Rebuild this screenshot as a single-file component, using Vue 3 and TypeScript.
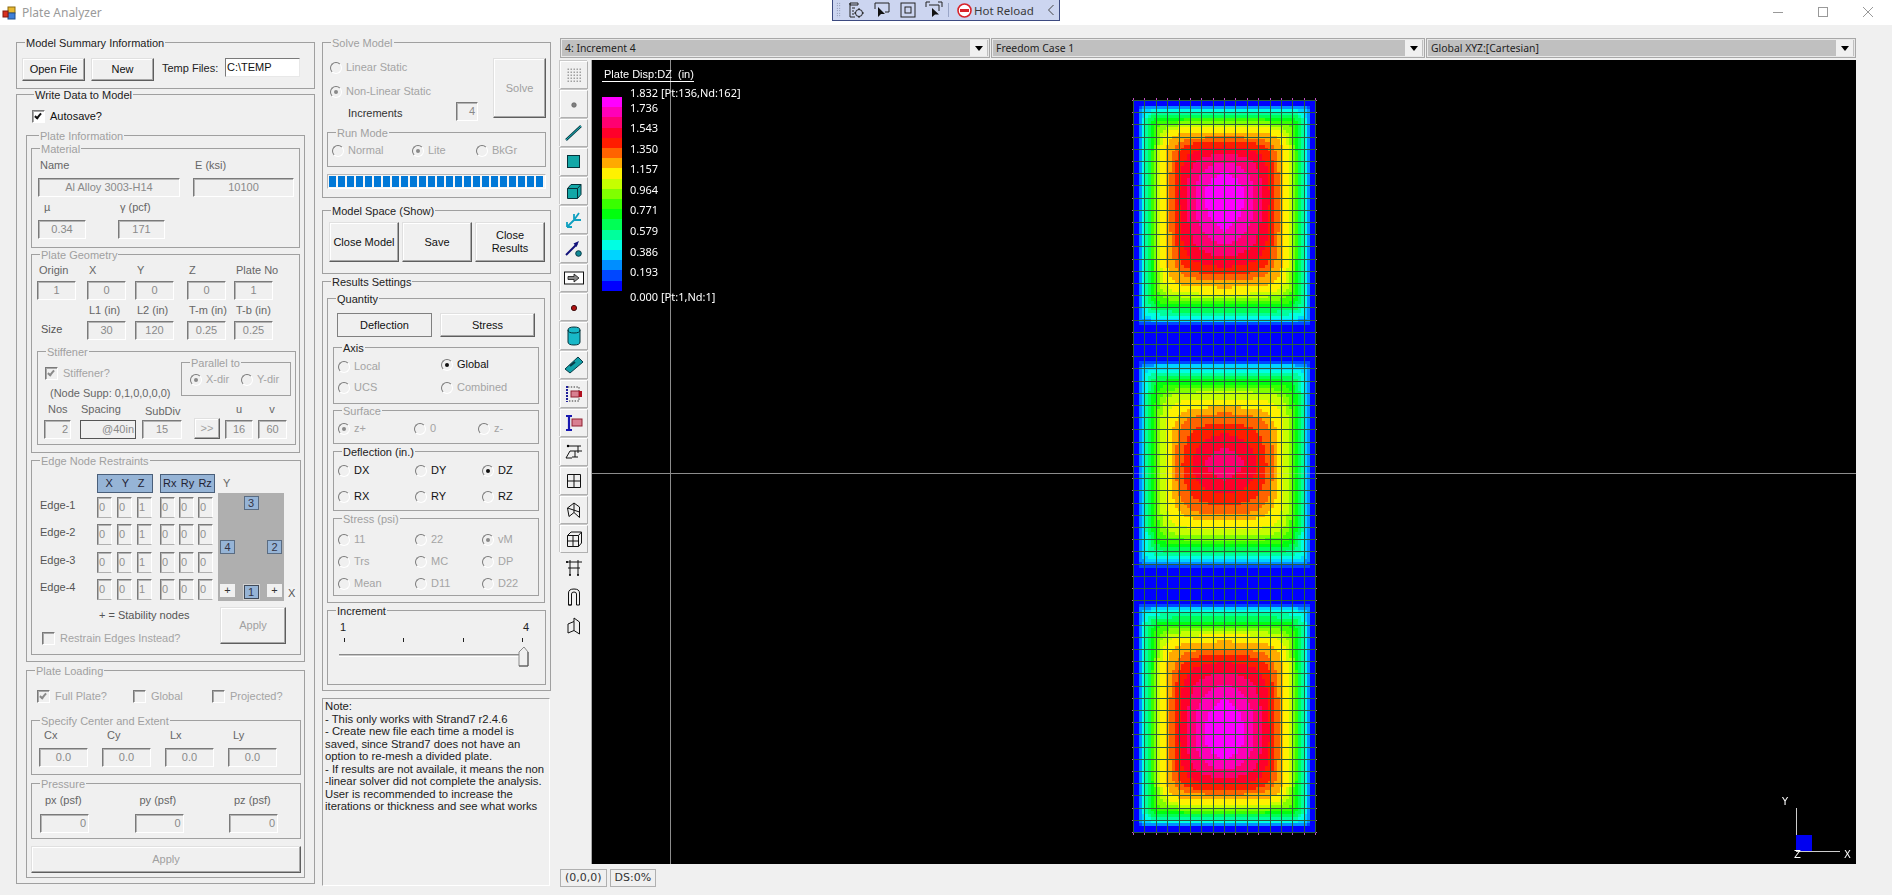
<script setup lang="ts">
import { onMounted, ref } from 'vue'

const plot = ref<HTMLCanvasElement | null>(null)

const hueOf = (i: number) => ((240 - i * (300 / 18)) % 360 + 360) % 360
const band = (i: number) => `hsl(${hueOf(i)},100%,50%)`
const legendBands = Array.from({ length: 19 }, (_, i) => band(18 - i))
const legendValues = ['1.736', '1.543', '1.350', '1.157', '0.964', '0.771', '0.579', '0.386', '0.193']
const segments = Array.from({ length: 24 }, (_, i) => i)

const edges = [
  ['Edge-1', ['0', '0', '1', '0', '0', '0']],
  ['Edge-2', ['0', '0', '1', '0', '0', '0']],
  ['Edge-3', ['0', '0', '1', '0', '0', '0']],
  ['Edge-4', ['0', '0', '1', '0', '0', '0']],
] as const

const geoTop = [['Origin', '1'], ['X', '0'], ['Y', '0'], ['Z', '0'], ['Plate No', '1']]
const geoSize = [['', ''], ['L1 (in)', '30'], ['L2 (in)', '120'], ['T-m (in)', '0.25'], ['T-b (in)', '0.25']]
const centerExtent = ['Cx', 'Cy', 'Lx', 'Ly']
const pressures = ['px (psf)', 'py (psf)', 'pz (psf)']
const deflection = [['DX', false], ['DY', false], ['DZ', true], ['RX', false], ['RY', false], ['RZ', false]] as const
const stress = [['11', false], ['22', false], ['vM', true], ['Trs', false], ['MC', false], ['DP', false], ['Mean', false], ['D11', false], ['D22', false]] as const

function ease(d: number): number {
  const t: [number, number][] = [[0, 0], [0.05, 0.05], [0.1, 0.19], [0.19, 0.38], [0.31, 0.6], [0.39, 0.67], [0.46, 0.76], [0.6, 0.87], [0.72, 0.95], [1, 1]]
  if (d >= 1) return 1
  for (let i = 1; i < t.length; i++) {
    if (d <= t[i][0]) {
      const [a, b] = t[i - 1]
      const [c, e] = t[i]
      return b + ((d - a) / (c - a)) * (e - b)
    }
  }
  return 1
}

function softMin(a: number, b: number): number {
  const p = 3.5
  if (a <= 0 || b <= 0) return 0
  return Math.pow(Math.pow(a, -p) + Math.pow(b, -p), -1 / p)
}

onMounted(() => {
  const c = plot.value
  if (!c) return
  const g = c.getContext('2d')
  if (!g) return
  const ox = 592
  const oy = 60
  const L = 1133
  const R = 1316
  const T = 100
  const B = 832
  g.fillStyle = '#000'
  g.fillRect(0, 0, c.width, c.height)
  g.fillStyle = '#8c8c8c'
  g.fillRect(0, 473 - oy, c.width, 1)
  g.fillRect(670 - ox, 0, 1, c.height)
  // top, bottom, amplitude, top scale, bottom scale
  const panels = [[100, 332, 1, 1, 1.4], [353, 575, 0.92, 1.45, 1.45], [597, 832, 1, 1.4, 1]]
  const step = 3
  for (let y = T; y < B; y += step) {
    for (let x = L; x < R; x += step) {
      let i = 0
      const px = x + 1.5
      const py = y + 1.5
      for (const [a, b, amp, st, sb] of panels) {
        if (py >= a && py <= b) {
          const dx = Math.min(1, Math.min(px - L, R - px) / 91)
          const dy = Math.min(1, Math.min((py - a) / st, (b - py) / sb) / 91)
          i = Math.min(18, Math.floor(ease(softMin(dx, dy)) * amp * 19))
        }
      }
      g.fillStyle = band(i)
      g.fillRect(x - ox, y - oy, step, step)
    }
  }
  g.fillStyle = 'rgba(190,190,190,.4)'
  g.fillRect(L - ox, 473 - oy, R - L, 1)
  g.fillStyle = '#2a5f3e'
  const w = (R - 1 - L) / 16
  const h = (B - T) / 60
  for (let i = 0; i <= 16; i++) g.fillRect(Math.round(L + i * w) - ox, T - oy, 1, B - T + 1)
  for (let j = 0; j <= 60; j++) g.fillRect(L - ox, Math.round(T + j * h) - oy, R - L, 1)
  g.fillStyle = '#c050c0'
  for (let i = 0; i <= 16; i++) {
    g.fillRect(Math.round(L + i * w) - ox, T - 2 - oy, 1, 2)
    g.fillRect(Math.round(L + i * w) - ox, B + 1 - oy, 1, 2)
  }
  for (let j = 0; j <= 60; j++) {
    g.fillRect(L - 1 - ox, Math.round(T + j * h) - oy, 1, 1)
    g.fillRect(R - ox, Math.round(T + j * h) - oy, 1, 1)
  }
})
</script>

<template>
  <div class="app">
    <header class="title">
      <svg class="logo" width="14" height="14" viewBox="0 0 14 14">
        <rect x="6" y="1" width="7" height="6" fill="#e8b830" stroke="#8a6a10" />
        <rect x="6" y="7" width="7" height="6" fill="#3f7fd8" stroke="#20508a" />
        <rect x="1" y="5" width="5" height="6" fill="#d83020" stroke="#801810" />
      </svg>
      <span class="title-text">Plate Analyzer</span>
      <div class="win">
        <svg width="12" height="12" viewBox="0 0 12 12"><path d="M1 6.5H11" stroke="#999" /></svg>
        <svg width="12" height="12" viewBox="0 0 12 12"><rect x="1.5" y="1.5" width="9" height="9" fill="none" stroke="#999" /></svg>
        <svg width="12" height="12" viewBox="0 0 12 12"><path d="M1 1L11 11M11 1L1 11" stroke="#999" fill="none" /></svg>
      </div>
    </header>

    <div class="debugbar">
      <span class="grip"></span>
      <svg width="18" height="18" viewBox="0 0 18 18"><path d="M3 2H11V4H3ZM3 2V16H8M5 7H8M5 10H7M5 13H7" fill="none" stroke="#222" /><circle cx="12" cy="12" r="3.5" fill="none" stroke="#222" /><path d="M12 7V9M12 15V17M7 12H9M15 12H17" stroke="#222" /></svg>
      <svg width="18" height="18" viewBox="0 0 18 18"><path d="M2 8V2H16V11H12" fill="none" stroke="#222" /><path d="M5 6L5 16L8 13L12 13Z" fill="#111" /></svg>
      <svg width="18" height="18" viewBox="0 0 18 18"><rect x="2" y="2" width="14" height="14" fill="none" stroke="#222" /><rect x="6" y="6" width="6" height="6" fill="none" stroke="#222" /></svg>
      <svg width="18" height="18" viewBox="0 0 18 18"><path d="M1 6V1H5M13 1H17V6M4 4H14V10" fill="none" stroke="#222" /><path d="M7 7L7 16L10 13.5L14 13.5Z" fill="#111" /></svg>
      <i class="dsep"></i>
      <svg class="stop" width="15" height="15" viewBox="0 0 15 15"><circle cx="7.5" cy="7.5" r="6.5" fill="#fff" stroke="#d8232a" stroke-width="1.6" /><rect x="3" y="6" width="9" height="3" fill="#d8232a" /></svg>
      <span class="hot">Hot Reload</span>
      <svg class="chev" width="8" height="12" viewBox="0 0 8 12"><path d="M6.5 1L1.5 6L6.5 11" fill="none" stroke="#444" /></svg>
    </div>

    <main class="body">
      <!-- left column -->
      <section class="left">
        <fieldset class="g sum">
          <legend>Model Summary Information</legend>
          <div class="sum-row">
            <button class="btn b-top">Open File</button>
            <button class="btn b-top">New</button>
            <span class="temp-l">Temp Files:</span>
            <span class="temp-in">C:\TEMP</span>
          </div>
        </fieldset>

        <fieldset class="g write">
          <legend>Write Data to Model</legend>
          <label class="opt autosave"><i class="chk white on"></i><span>Autosave?</span></label>

          <fieldset class="g dis plate">
            <legend>Plate Information</legend>

            <fieldset class="g dis material">
              <legend>Material</legend>
              <div class="mat-labels"><span>Name</span><span>E (ksi)</span></div>
              <div class="mat-fields">
                <span class="f">Al Alloy 3003-H14</span>
                <span class="f">10100</span>
              </div>
              <div class="mat-labels2"><span>&micro;</span><span>&gamma; (pcf)</span></div>
              <div class="mat-fields2">
                <span class="f">0.34</span>
                <span class="f">171</span>
              </div>
            </fieldset>

            <fieldset class="g dis geom">
              <legend>Plate Geometry</legend>
              <div class="geo-grid first">
                <span v-for="g in geoTop" :key="g[0]" class="lb">{{ g[0] }}</span>
              </div>
              <div class="geo-grid gap3">
                <span v-for="g in geoTop" :key="g[0]" class="f">{{ g[1] }}</span>
              </div>
              <div class="geo-grid gap4">
                <span v-for="g in geoSize" :key="g[0]" class="lb">{{ g[0] }}</span>
              </div>
              <div class="geo-grid gap3">
                <span class="size-l">Size</span>
                <span v-for="g in geoSize.slice(1)" :key="g[0]" class="f">{{ g[1] }}</span>
              </div>

              <fieldset class="g dis stiff">
                <legend>Stiffener</legend>
                <div class="stiff-top">
                  <div class="stiff-l">
                    <label class="opt off stiff-chk"><i class="chk on"></i><span>Stiffener?</span></label>
                    <span class="node-supp">(Node Supp: 0,1,0,0,0,0)</span>
                  </div>
                  <fieldset class="g dis parallel">
                    <legend>Parallel to</legend>
                    <div class="par-row">
                      <label class="opt off"><i class="radio on"></i><span>X-dir</span></label>
                      <label class="opt off"><i class="radio"></i><span>Y-dir</span></label>
                    </div>
                  </fieldset>
                </div>
                <div class="st-grid st-labels">
                  <span class="st-nos">Nos</span><span class="st-sp">Spacing</span><span class="st-sub">SubDiv</span><span></span><span class="st-c">u</span><span class="st-c">v</span>
                </div>
                <div class="st-grid st-inputs">
                  <span class="f r">2</span>
                  <span class="f r dark">@40in</span>
                  <span class="f">15</span>
                  <button class="btn dim arrows">&gt;&gt;</button>
                  <span class="f">16</span>
                  <span class="f">60</span>
                </div>
              </fieldset>
            </fieldset>

            <fieldset class="g dis edge">
              <legend>Edge Node Restraints</legend>
              <div class="edge-top">
                <div>
                  <div class="edge-head">
                    <span class="dof trans"><b>X</b><b>Y</b><b>Z</b></span>
                    <span class="dof rot"><b>Rx</b><b>Ry</b><b>Rz</b></span>
                  </div>
                  <div v-for="e in edges" :key="e[0]" class="edge-row">
                    <span class="edge-l">{{ e[0] }}</span>
                    <span v-for="(v, i) in e[1]" :key="i" class="f l">{{ v }}</span>
                  </div>
                </div>
                <div class="edge-map">
                  <span class="y-lab">Y</span>
                  <div class="map-row">
                    <div class="map">
                      <span></span><span class="badge t">3</span><span></span>
                      <span class="badge">4</span><span></span><span class="badge">2</span>
                      <span class="plus">+</span><span class="badge b one">1</span><span class="plus">+</span>
                    </div>
                    <span class="x-lab">X</span>
                  </div>
                </div>
              </div>
              <div class="edge-bottom">
                <div>
                  <div class="stab">+ = Stability nodes</div>
                  <label class="opt off restrain"><i class="chk"></i><span>Restrain Edges Instead?</span></label>
                </div>
                <button class="btn dim apply-small">Apply</button>
              </div>
            </fieldset>
          </fieldset>

          <fieldset class="g dis load">
            <legend>Plate Loading</legend>
            <div class="load-row">
              <label class="opt off"><i class="chk on"></i><span>Full Plate?</span></label>
              <label class="opt off"><i class="chk"></i><span>Global</span></label>
              <label class="opt off"><i class="chk"></i><span>Projected?</span></label>
            </div>
            <fieldset class="g dis center">
              <legend>Specify Center and Extent</legend>
              <div class="ce-grid ce-l"><span v-for="c in centerExtent" :key="c">{{ c }}</span></div>
              <div class="ce-grid ce-f"><span v-for="c in centerExtent" :key="c" class="f">0.0</span></div>
            </fieldset>
            <fieldset class="g dis press">
              <legend>Pressure</legend>
              <div class="pr-grid pr-l"><span v-for="p in pressures" :key="p">{{ p }}</span></div>
              <div class="pr-grid pr-f"><span v-for="p in pressures" :key="p" class="f r">0</span></div>
            </fieldset>
            <button class="btn dim apply-wide">Apply</button>
          </fieldset>
        </fieldset>
      </section>

      <!-- middle column -->
      <section class="mid">
        <fieldset class="g dis solve">
          <legend>Solve Model</legend>
          <div class="solve-top">
            <div class="solve-l">
              <label class="opt off linear"><i class="radio"></i><span>Linear Static</span></label>
              <label class="opt off nonlinear"><i class="radio on"></i><span>Non-Linear Static</span></label>
              <div class="incr"><span>Increments</span><span class="f r">4</span></div>
            </div>
            <button class="btn dim solve-btn">Solve</button>
          </div>
          <fieldset class="g dis run">
            <legend>Run Mode</legend>
            <div class="run-row">
              <label class="opt off"><i class="radio"></i><span>Normal</span></label>
              <label class="opt off"><i class="radio on"></i><span>Lite</span></label>
              <label class="opt off"><i class="radio"></i><span>BkGr</span></label>
            </div>
          </fieldset>
          <div class="progress"><i v-for="s in segments" :key="s"></i></div>
        </fieldset>

        <fieldset class="g space">
          <legend>Model Space (Show)</legend>
          <div class="space-row">
            <button class="btn">Close Model</button>
            <button class="btn">Save</button>
            <button class="btn">Close<br />Results</button>
          </div>
        </fieldset>

        <fieldset class="g results">
          <legend>Results Settings</legend>
          <fieldset class="g quantity">
            <legend>Quantity</legend>
            <div class="q-row">
              <button class="btn flat">Deflection</button>
              <button class="btn">Stress</button>
            </div>

            <fieldset class="g axis">
              <legend>Axis</legend>
              <div class="ax-grid">
                <label class="opt off"><i class="radio"></i><span>Local</span></label>
                <label class="opt raised"><i class="radio on"></i><span>Global</span></label>
                <label class="opt off"><i class="radio"></i><span>UCS</span></label>
                <label class="opt off"><i class="radio"></i><span>Combined</span></label>
              </div>
            </fieldset>

            <fieldset class="g dis surface">
              <legend>Surface</legend>
              <div class="su-grid">
                <label class="opt off"><i class="radio on"></i><span>z+</span></label>
                <label class="opt off"><i class="radio"></i><span>0</span></label>
                <label class="opt off"><i class="radio"></i><span>z-</span></label>
              </div>
            </fieldset>

            <fieldset class="g defl">
              <legend>Deflection (in.)</legend>
              <div class="de-grid">
                <label v-for="d in deflection" :key="d[0]" class="opt"><i class="radio" :class="{ on: d[1] }"></i><span>{{ d[0] }}</span></label>
              </div>
            </fieldset>

            <fieldset class="g dis stress">
              <legend>Stress (psi)</legend>
              <div class="sr-grid">
                <label v-for="d in stress" :key="d[0]" class="opt off"><i class="radio" :class="{ on: d[1] }"></i><span>{{ d[0] }}</span></label>
              </div>
            </fieldset>
          </fieldset>

          <fieldset class="g increment">
            <legend>Increment</legend>
            <div class="slider">
              <div class="sl-labels"><span>1</span><span>4</span></div>
              <div class="ticks"><i></i><i></i><i></i><i></i></div>
              <div class="track">
                <svg class="thumb" width="11" height="21" viewBox="0 0 11 21"><path d="M1 20V6L6 1L10 6V20Z" fill="#f0f0f0" stroke="#8a8a8a" /><path d="M1 20H10V6" fill="none" stroke="#555" /></svg>
              </div>
            </div>
          </fieldset>
        </fieldset>

        <div class="note">Note:<br />- This only works with Strand7 r2.4.6<br />- Create new file each time a model is<br />saved, since Strand7 does not have an<br />option to re-mesh a divided plate.<br />- If results are not availale, it means the non<br />-linear solver did not complete the analysis.<br />User is recommended to increase the<br />iterations or thickness and see what works</div>
      </section>

      <!-- right column -->
      <section class="right">
        <div class="combos">
          <div class="combo c1"><span>4: Increment 4</span><i><b></b></i></div>
          <div class="combo c2"><span>Freedom Case 1</span><i><b></b></i></div>
          <div class="combo c3"><span>Global XYZ:[Cartesian]</span><i><b></b></i></div>
        </div>
        <div class="work">
          <div class="tools">
            <button class="tb"><svg width="20" height="20" viewBox="0 0 20 20"><g fill="#a0a0a0"><rect v-for="n in 25" :key="n" :x="3.5 + ((n - 1) % 5) * 3" :y="3.5 + Math.floor((n - 1) / 5) * 3" width="1.5" height="1.5" /></g></svg></button>
            <button class="tb"><svg width="20" height="20" viewBox="0 0 20 20"><circle cx="10" cy="11" r="2.3" fill="#808080" stroke="#555" stroke-width=".6" /></svg></button>
            <button class="tb"><svg width="20" height="20" viewBox="0 0 20 20"><path d="M2 17L17 3" stroke="#063a46" stroke-width="2.4" /><path d="M2 17L17 3" stroke="#1fc0c0" stroke-width="1" /></svg></button>
            <button class="tb"><svg width="20" height="20" viewBox="0 0 20 20"><rect x="3.5" y="3.5" width="12" height="12" fill="#12a7a7" stroke="#04323a" /></svg></button>
            <button class="tb"><svg width="20" height="20" viewBox="0 0 20 20"><path d="M3.5 7.5H13.5V17.5H3.5ZM3.5 7.5L7 3.5H17V13.5L13.5 17.5M13.5 7.5L17 3.5" fill="#12a7a7" stroke="#04323a" stroke-linejoin="round" /></svg></button>
            <button class="tb"><svg width="20" height="20" viewBox="0 0 20 20"><path d="M3 17L10 10M10 10V4M10 10H17M3 17V12M3 17H8M10 10L15 3" fill="none" stroke="#10a0c0" stroke-width="1.8" /></svg></button>
            <button class="tb"><svg width="20" height="20" viewBox="0 0 20 20"><path d="M2 16L13 5" stroke="#12127a" stroke-width="2" /><path d="M15 2L9.5 4.5L12.5 8Z" fill="#12127a" /><circle cx="14.5" cy="14.5" r="2.8" fill="#128a96" stroke="#063a46" /></svg></button>
            <button class="tb"><svg width="22" height="18" viewBox="0 0 22 18"><rect x="1.5" y="3" width="19" height="12" fill="#fff" stroke="#111" /><path d="M5 7.5H11V5L16 9L11 13V10.5H5Z" fill="#8a8a8a" stroke="#111" stroke-width=".8" /></svg></button>
            <button class="tb"><svg width="20" height="20" viewBox="0 0 20 20"><circle cx="10" cy="11" r="2.6" fill="#b01010" stroke="#401010" /></svg></button>
            <button class="tb"><svg width="20" height="22" viewBox="0 0 20 22"><path d="M4 5V17Q4 20 10 20Q16 20 16 17V5Q16 2 10 2Q4 2 4 5Z" fill="#18b8c8" stroke="#04323a" /><path d="M4 5Q4 8 10 8Q16 8 16 5" fill="none" stroke="#04323a" /></svg></button>
            <button class="tb"><svg width="22" height="20" viewBox="0 0 22 20"><path d="M2 14L15 2L20 7L7 18Z" fill="#12a0a8" stroke="#063a46" /><path d="M7 11L12 7" stroke="#063a46" stroke-width="2" /></svg></button>
            <button class="tb"><svg width="22" height="20" viewBox="0 0 22 20"><path d="M5 3H16V17H5" fill="none" stroke="#333" stroke-dasharray="1.4 1.4" /><path d="M4 2V18" stroke="#20209a" stroke-width="2" stroke-dasharray="2 1" /><rect x="8" y="7" width="8" height="6" fill="#d88090" stroke="#902030" /><rect x="16" y="7" width="3" height="6" fill="#b01020" /></svg></button>
            <button class="tb"><svg width="22" height="20" viewBox="0 0 22 20"><path d="M3 3H9M3 17H9M6 3V17" stroke="#1818b0" stroke-width="2.2" /><rect x="9" y="6" width="10" height="7" fill="#d88090" stroke="#902030" /></svg></button>
            <button class="tb"><svg width="20" height="20" viewBox="0 0 20 20"><path d="M3 4H17M2 16L6 9H18M11 9V15M14 4V11M8 15H14M2 16H8" fill="none" stroke="#111" /><circle cx="4" cy="4" r="1.2" /></svg></button>
            <button class="tb"><svg width="20" height="20" viewBox="0 0 20 20"><path d="M3.5 3.5H16.5V16.5H3.5ZM10 3.5V16.5M3.5 10H16.5" fill="none" stroke="#111" /></svg></button>
            <button class="tb"><svg width="20" height="20" viewBox="0 0 20 20"><path d="M3.5 8L10 3L15.5 7V17.5L10 12.5L5 16.5ZM10 3V12.5M3.5 8L15.5 12" fill="none" stroke="#111" /></svg></button>
            <button class="tb"><svg width="20" height="20" viewBox="0 0 20 20"><path d="M3.5 6.5H14.5V17.5H3.5ZM3.5 6.5L7 3H17.5V14L14.5 17.5M14.5 6.5L17.5 3M9 6.5V17.5M3.5 12H14.5" fill="none" stroke="#111" /></svg></button>
            <span class="tb plain"><svg width="20" height="20" viewBox="0 0 20 20"><path d="M2 4H18M6 2V17M14 2V17M4 10H16" fill="none" stroke="#111" /><circle cx="3" cy="4" r="1" /><circle cx="6" cy="17" r="1" /><circle cx="14" cy="17" r="1" /></svg></span>
            <span class="tb plain"><svg width="20" height="20" viewBox="0 0 20 20"><path d="M4.5 18V6Q4.5 2 10 2Q15.5 2 15.5 6V18H12.5V7Q12.5 5 10 5Q7.5 5 7.5 7V18ZM7.5 18H4.5" fill="none" stroke="#111" /></svg></span>
            <span class="tb plain"><svg width="20" height="20" viewBox="0 0 20 20"><path d="M4 17V8L10 5.5V2L15.5 6V18L10 14.5ZM10 5.5V14.5" fill="none" stroke="#111" /></svg></span>
          </div>

          <div class="viewport">
            <canvas ref="plot" width="1264" height="804"></canvas>
            <div class="legend-title">Plate Disp:DZ &nbsp;(in)</div>
            <div class="legend-bar"><i v-for="(b, i) in legendBands" :key="i" :style="{ background: b }"></i></div>
            <div class="legend-vals">
              <span class="vmax">1.832 [Pt:136,Nd:162]</span>
              <span v-for="v in legendValues" :key="v">{{ v }}</span>
              <span class="vmin">0.000 [Pt:1,Nd:1]</span>
            </div>
            <div class="triad">
              <span class="ty">Y</span>
              <i class="tv"></i>
              <i class="th"></i>
              <i class="ts"></i>
              <span class="tz">Z</span>
              <span class="tx">X</span>
            </div>
          </div>
        </div>
        <div class="status"><span>(0,0,0)</span><span>DS:0%</span></div>
      </section>
    </main>
  </div>
</template>

<style>
html, body { margin: 0; background: #f0f0f0; }
</style>

<style scoped>
.app {
  width: 1892px;
  height: 895px;
  background: #f0f0f0;
  display: flex;
  flex-direction: column;
  overflow: hidden;
  position: relative;
  font: 11px/13px "Liberation Sans", Arial, sans-serif;
  color: #222;
}
.title {
  height: 25px;
  flex: none;
  background: #fff;
  display: flex;
  align-items: center;
  padding-left: 2px;
  box-sizing: border-box;
}
.logo { margin-right: 6px; }
.title-text { font: 12px "Noto Sans", sans-serif; color: #9a9a9a; }
.win { margin-left: auto; margin-right: 18px; display: flex; gap: 33px; margin-top: -2px; }
.debugbar {
  position: absolute;
  left: 832px;
  top: 0;
  width: 228px;
  height: 21px;
  box-sizing: border-box;
  background: #ccd5f0;
  border: 1px solid #3c4a80;
  border-top: 0;
  display: flex;
  align-items: center;
  padding-left: 3px;
  gap: 8px;
}
.grip { width: 5px; height: 16px; background: radial-gradient(#6a7590 40%, transparent 45%) 0 0 / 2.5px 2.5px; margin-right: -2px; }
.dsep { width: 1px; height: 14px; background: #9aa6c8; margin: 0 0 0 -3px; }
.stop { margin-right: -6px; }
.hot { font: 11.5px "Noto Sans", sans-serif; color: #3a3a3a; white-space: nowrap; }
.chev { margin-left: 5px; }

.body { display: flex; padding: 11px 0 0 16px; flex: 1; min-height: 0; }
.g {
  margin: 0;
  padding: 0;
  box-sizing: border-box;
  border: 1px solid #a0a0a0;
  min-width: 0;
}
.g > legend {
  padding: 0 1px;
  margin-left: 8px;
  line-height: 13px;
  color: #222;
  position: relative;
  top: 1px;
}
.g.dis > legend { color: #a0a0a0; }

.btn {
  font: 11px/13px "Liberation Sans", Arial, sans-serif;
  color: #111;
  background: #f0f0f0;
  padding: 0;
  box-sizing: border-box;
  border: 1px solid;
  border-color: #e0e0e0 #5e5e5e #5e5e5e #e0e0e0;
  box-shadow: inset -1px -1px 0 #a8a8a8, inset 1px 1px 0 #fff;
}
.btn.dim { color: #a0a0a0; }
.btn.flat { border: 1px solid #808080; box-shadow: none; }

.f {
  display: flex;
  align-items: center;
  justify-content: center;
  height: 19px;
  box-sizing: border-box;
  border: 1px solid;
  border-color: #7a7a7a #fff #fff #7a7a7a;
  box-shadow: inset 1px 1px 0 #b4b4b4;
  color: #8a8a8a;
  background: #f0f0f0;
  white-space: nowrap;
}
.f.r { justify-content: flex-end; padding-right: 2px; }
.f.l { justify-content: flex-start; padding-left: 2px; }
.f.dark { border-color: #555; box-shadow: none; padding-right: 1px; }

.opt { display: inline-flex; align-items: center; gap: 4px; line-height: 13px; white-space: nowrap; color: #111; }
.opt.off { color: #a4a4a4; }
.radio, .chk { flex: none; display: block; box-sizing: border-box; position: relative; }
.radio {
  width: 12px;
  height: 12px;
  border-radius: 50%;
  border: 1px solid;
  border-color: #7a7a7a #fff #fff #7a7a7a;
  background: #f0f0f0;
}
.radio.on::after {
  content: "";
  position: absolute;
  left: 3px;
  top: 3px;
  width: 4px;
  height: 4px;
  border-radius: 50%;
  background: #111;
}
.off .radio.on::after { background: #8a8a8a; }
.chk {
  width: 13px;
  height: 13px;
  border: 1px solid;
  border-color: #7a7a7a #fff #fff #7a7a7a;
  box-shadow: inset 1px 1px 0 #a8a8a8;
  background: #f0f0f0;
  margin-right: 1px;
}
.chk.white { background: #fff; }
.chk.on::after {
  content: "";
  position: absolute;
  left: 3px;
  top: 1px;
  width: 4px;
  height: 7px;
  border: solid #111;
  border-width: 0 2px 2px 0;
  transform: rotate(40deg);
  box-sizing: border-box;
}
.off .chk.on::after { border-color: #8a8a8a; }

/* left column */
.left { width: 299px; flex: none; display: flex; flex-direction: column; }
.sum { height: 53px; }
.sum-row { display: flex; padding: 9px 0 0 5px; align-items: flex-start; }
.b-top { width: 63px; height: 23px; margin-right: 6px; }
.temp-l { margin: 4px 0 0 2px; width: 63px; }
.temp-in {
  width: 75px;
  height: 19px;
  box-sizing: border-box;
  background: #fff;
  color: #111;
  border: 1px solid;
  border-color: #7a7a7a #e8e8e8 #e8e8e8 #7a7a7a;
  padding: 2px 0 0 1px;
}
.write { height: 796px; padding: 0 9px; margin-top: -1px; }
.autosave { margin: 9px 0 0 6px; display: flex; }
.plate { height: 533px; margin-top: 6px; padding: 0 4px; }
.material { height: 106px; }
.mat-labels { display: grid; grid-template-columns: 155px auto; padding: 4px 0 0 8px; color: #666; }
.mat-fields { display: grid; grid-template-columns: 142px 101px; column-gap: 13px; padding: 6px 0 0 6px; }
.mat-labels2 { display: grid; grid-template-columns: 76px auto; padding: 4px 0 0 12px; color: #666; }
.mat-fields2 { display: grid; grid-template-columns: 48px 47px; column-gap: 32px; padding: 6px 0 0 6px; }
.geom { height: 205px; }
.geo-grid { display: grid; grid-template-columns: 50px 48px 52px 47px 39px; padding-left: 5px; color: #666; }
.geo-grid .f { width: 39px; }
.geo-grid.first { padding-top: 3px; }
.geo-grid.gap3 { padding-top: 4px; }
.geo-grid.gap4 { padding-top: 4px; }
.lb { margin-left: 2px; white-space: nowrap; height: 13px; }
.size-l { margin: 2px 0 0 4px; color: #555; }
.stiff { width: 259px; height: 100px; margin: 5px 0 0 5px; }
.stiff-top { display: flex; height: 45px; }
.stiff-l { width: 143px; flex: none; display: flex; flex-direction: column; align-items: flex-start; }
.stiff-chk { margin: 9px 0 0 7px; }
.node-supp { margin: 7px 0 0 12px; white-space: nowrap; color: #666; }
.parallel { width: 110px; height: 40px; margin-top: -2px; }
.par-row { display: grid; grid-template-columns: 51px auto; padding: 4px 0 0 8px; }
.st-grid { display: grid; grid-template-columns: 36px 62px 52px 31px 33px 29px; padding-left: 6px; color: #666; align-items: end; }
.st-labels { height: 13px; }
.st-nos { margin-left: 4px; }
.st-sp { margin-left: 1px; }
.st-sub { margin: 0 0 -2px 3px; }
.st-c { width: 28px; text-align: center; }
.st-inputs { margin-top: 2px; height: 21px; }
.st-inputs .f:nth-child(1) { width: 27px; }
.st-inputs .f:nth-child(2) { width: 56px; }
.st-inputs .f:nth-child(3) { width: 40px; }
.st-inputs .f:nth-child(5) { width: 28px; }
.st-inputs .f:nth-child(6) { width: 29px; }
.arrows { width: 26px; height: 21px; }

.edge { width: 270px; height: 201px; margin-top: 1px; }
.edge-top { display: flex; padding-top: 7px; height: 134px; box-sizing: border-box; }
.edge-head { display: flex; padding-left: 65px; height: 19px; }
.dof {
  display: flex;
  align-items: center;
  justify-content: space-around;
  height: 19px;
  box-sizing: border-box;
  background: #96b4d6;
  border: 1px solid #4a5f7a;
  color: #223;
}
.dof b { font-weight: 400; }
.trans { width: 56px; padding: 0 3px; }
.rot { width: 55px; margin-left: 7px; }
.edge-row {
  display: grid;
  column-gap: 0;
  grid-template-columns: 65px 20px 20px 23px 19px 19px 15px;
  height: 27.3px;
  align-items: start;
}
.edge-head + .edge-row { margin-top: 4px; }
.edge-row .f { width: 15px; height: 21px; border-bottom-color: #b0b0b0; color: #909090; padding-left: 1px; }
.edge-l { padding: 1px 0 0 8px; color: #555; line-height: 15px; }
.edge-map { margin-left: 3px; }
.y-lab { display: block; height: 19px; line-height: 19px; padding-left: 5px; color: #666; }
.map-row { display: flex; align-items: flex-end; }
.map {
  width: 66px;
  height: 108px;
  box-sizing: border-box;
  background: #afafaf;
  display: grid;
  grid-template-columns: 15px 15px 15px;
  grid-template-rows: 1fr 1fr 1fr;
  justify-content: space-between;
  align-items: center;
  padding: 3px 2px 2px;
}
.badge {
  width: 15px;
  height: 14px;
  box-sizing: border-box;
  background: #96b4d6;
  border: 1px solid #5a6c82;
  color: #334;
  text-align: center;
  line-height: 12px;
}
.badge.t { align-self: start; }
.badge.b { align-self: end; }
.badge.one { background: #96b4d6; border-color: #404a58; box-shadow: 0 0 0 1px #d0d0d0; }
.plus { width: 15px; height: 13px; background: #f0f0f0; text-align: center; line-height: 12px; align-self: end; margin-bottom: 2px; color: #333; font-size: 11px; }
.x-lab { background: #f2f2f2; padding: 0 2px; margin: 0 0 1px 2px; color: #555; }
.edge-bottom { display: flex; justify-content: space-between; margin-top: 6px; }
.stab { padding: 2px 0 0 67px; color: #555; white-space: nowrap; }
.restrain { margin: 10px 0 0 10px; }
.apply-small { width: 66px; height: 37px; margin-right: 14px; flex: none; }

.load { height: 214px; margin-top: 2px; }
.load-row { display: grid; grid-template-columns: 96px 79px auto; padding: 13px 0 0 10px; }
.center { width: 270px; height: 61px; margin: 11px 0 0 4px; }
.ce-grid { display: grid; grid-template-columns: repeat(4, 49px); column-gap: 14px; padding-left: 7px; }
.ce-l { padding-top: 2px; color: #666; }
.ce-l span { margin-left: 5px; }
.ce-f { padding-top: 6px; }
.press { width: 270px; height: 62px; margin: 2px 0 0 4px; }
.pr-grid { display: grid; grid-template-columns: 49px 49px 49px; column-gap: 45.5px; padding-left: 8px; }
.pr-l { padding-top: 4px; color: #666; }
.pr-l span { margin-left: 5px; white-space: nowrap; }
.pr-f { padding-top: 7px; }
.apply-wide { width: 270px; height: 27px; margin: 7px 0 0 4px; display: block; }

/* middle column */
.mid { width: 229px; flex: none; margin-left: 7px; display: flex; flex-direction: column; }
.solve { height: 162px; }
.solve-top { display: flex; height: 77px; }
.solve-l { width: 170px; flex: none; position: relative; }
.linear { display: flex; margin: 12px 0 0 7px; }
.nonlinear { display: flex; margin: 11px 0 0 7px; }
.incr { display: flex; align-items: flex-start; margin-top: 4px; padding-left: 25px; color: #333; }
.incr > span:first-child { width: 108px; margin-top: 5px; }
.incr .f { width: 22px; }
.solve-btn { width: 53px; height: 60px; margin-top: 9px; }
.run { width: 219px; height: 41px; margin-left: 4px; }
.run-row { display: grid; grid-template-columns: 80px 64px auto; padding: 5px 0 0 4px; }
.progress {
  width: 219px;
  height: 15px;
  box-sizing: border-box;
  margin: 7px 0 0 4px;
  background: #f6f6f6;
  border: 1px solid;
  border-color: #b8b8b8 #fff #fff #b8b8b8;
  display: flex;
  gap: 2px;
  padding: 1px;
}
.progress i { width: 7px; background: #0078d7; }
.space { height: 70px; margin-top: 6px; }
.space-row { display: flex; gap: 3px; padding: 5px 0 0 6px; }
.space-row .btn { width: 70px; height: 40px; }
.results { height: 416px; margin-top: 1px; }
.quantity { width: 218px; height: 311px; margin: 4px 0 0 4px; }
.q-row { display: flex; gap: 8px; padding: 8px 0 0 9px; }
.q-row .btn { width: 95px; height: 24px; }
.axis { width: 206px; height: 63px; margin: 4px 0 0 5px; }
.ax-grid { display: grid; grid-template-columns: 103px auto; row-gap: 8px; padding: 6px 0 0 4px; }
.raised { position: relative; top: -2px; }
.surface { width: 206px; height: 40px; margin-left: 5px; }
.su-grid { display: grid; grid-template-columns: 76px 64px auto; padding: 5px 0 0 4px; }
.defl { width: 206px; height: 66px; margin: 1px 0 0 5px; }
.de-grid { display: grid; grid-template-columns: 77px 67px auto; row-gap: 13px; padding: 6px 0 0 4px; }
.stress { width: 206px; height: 84px; margin: 1px 0 0 5px; }
.sr-grid { display: grid; grid-template-columns: 77px 67px auto; row-gap: 9px; padding: 8px 0 0 4px; }
.increment { width: 219px; height: 81px; margin: 1px 0 0 4px; }
.slider { width: 189px; margin-left: 11px; padding-top: 4px; }
.sl-labels { display: flex; justify-content: space-between; padding: 0 0 0 1px; }
.sl-labels span:last-child { margin-right: -1px; }
.ticks { display: flex; justify-content: space-between; padding: 4px 5px 0 5px; height: 4px; }
.ticks i { width: 1px; height: 4px; background: #222; }
.track { position: relative; margin-top: 12px; width: 180px; height: 3px; box-sizing: border-box; background: #c8c8c8; border-top: 1px solid #8a8a8a; border-bottom: 1px solid #fff; }
.thumb { position: absolute; right: -10px; top: -9px; }
.note {
  margin-top: 7px;
  width: 228px;
  height: 188px;
  box-sizing: border-box;
  border: 1px solid;
  border-color: #a0a0a0 #fff #fff #a0a0a0;
  padding: 1px 0 0 2px;
  line-height: 12.5px;
  font-size: 11.3px;
  color: #222;
  white-space: nowrap;
}

/* right column */
.right { width: 1296px; flex: none; margin-left: 9px; display: flex; flex-direction: column; }
.combos { display: flex; gap: 1px; margin-top: 2px; height: 20px; }
.combo {
  box-sizing: border-box;
  border: 1px solid #a8a8a8;
  background: #c0c0c0;
  box-shadow: inset 0 0 0 1px #e8e8e8;
  display: flex;
  align-items: center;
  justify-content: space-between;
  padding-left: 4px;
  font: 10.4px "Noto Sans", sans-serif;
  color: #222;
}
.c1 { width: 430px; }
.c2 { width: 434px; }
.c3 { width: 430px; }
.combo i { width: 17px; height: 16px; margin-right: 2px; background: #f0f0f0; display: flex; align-items: center; justify-content: center; }
.combo b { width: 0; height: 0; border: 4px solid transparent; border-top: 5px solid #000; border-bottom: 0; }
.work { display: flex; margin-top: 2px; height: 804px; }
.tools { width: 32px; flex: none; display: flex; flex-direction: column; gap: 1px; padding-top: 1px; box-sizing: border-box; }
.tb {
  width: 28px;
  height: 28px;
  padding: 0;
  box-sizing: border-box;
  background: #f0f0f0;
  border: 1px solid;
  border-color: #fff #b0b0b0 #b0b0b0 #fff;
  box-shadow: -1px -1px 0 #c8c8c8;
  display: flex;
  align-items: center;
  justify-content: center;
}
.tb.plain { border-color: transparent; box-shadow: none; }
.viewport { position: relative; width: 1264px; height: 804px; background: #000; }
.viewport canvas { display: block; }
.viewport::before { content: ""; position: absolute; left: -1px; top: 0; bottom: 0; width: 1px; background: #a8a8a8; }
.legend-title {
  position: absolute;
  left: 10px;
  top: 8px;
  width: 92px;
  height: 14px;
  padding-left: 2px;
  box-sizing: border-box;
  border-bottom: 1px solid #fff;
  color: #fff;
  font: 11px/13px "Liberation Sans", Arial, sans-serif;
  white-space: nowrap;
}
.legend-bar {
  position: absolute;
  left: 10px;
  top: 37px;
  width: 20px;
  height: 194px;
  display: flex;
  flex-direction: column;
}
.legend-bar i { flex: 1; }
.legend-vals {
  position: absolute;
  left: 38px;
  top: 26px;
  display: flex;
  flex-direction: column;
  color: #fff;
  font: 11px/13px "Noto Sans", sans-serif;
  white-space: nowrap;
}
.legend-vals span { height: 20.6px; line-height: 20.6px; }
.legend-vals .vmax { height: 11.5px; line-height: 14px; }
.legend-vals .vmin { margin-top: 4px; }
.triad { position: absolute; right: 0; bottom: 0; width: 100px; height: 80px; color: #fff; font: 10px/12px "DejaVu Sans", sans-serif; }
.ty { position: absolute; left: 26px; top: 12px; }
.tx { position: absolute; left: 88px; top: 65px; }
.tz { position: absolute; left: 38px; top: 65px; }
.tv { position: absolute; left: 40px; top: 24px; width: 1px; height: 43px; background: #ccc; }
.th { position: absolute; left: 40px; top: 67px; width: 44px; height: 1px; background: #ccc; }
.ts { position: absolute; left: 40px; top: 51px; width: 16px; height: 16px; background: #0000f0; }
.status { display: flex; gap: 3px; margin-top: 5px; }
.status span {
  height: 18px;
  box-sizing: border-box;
  border: 1px solid #b0b0b0;
  padding: 0 4px;
  line-height: 16px;
  font: 11px/16px "DejaVu Sans", sans-serif;
  color: #333;
  background: #f0f0f0;
}
</style>
